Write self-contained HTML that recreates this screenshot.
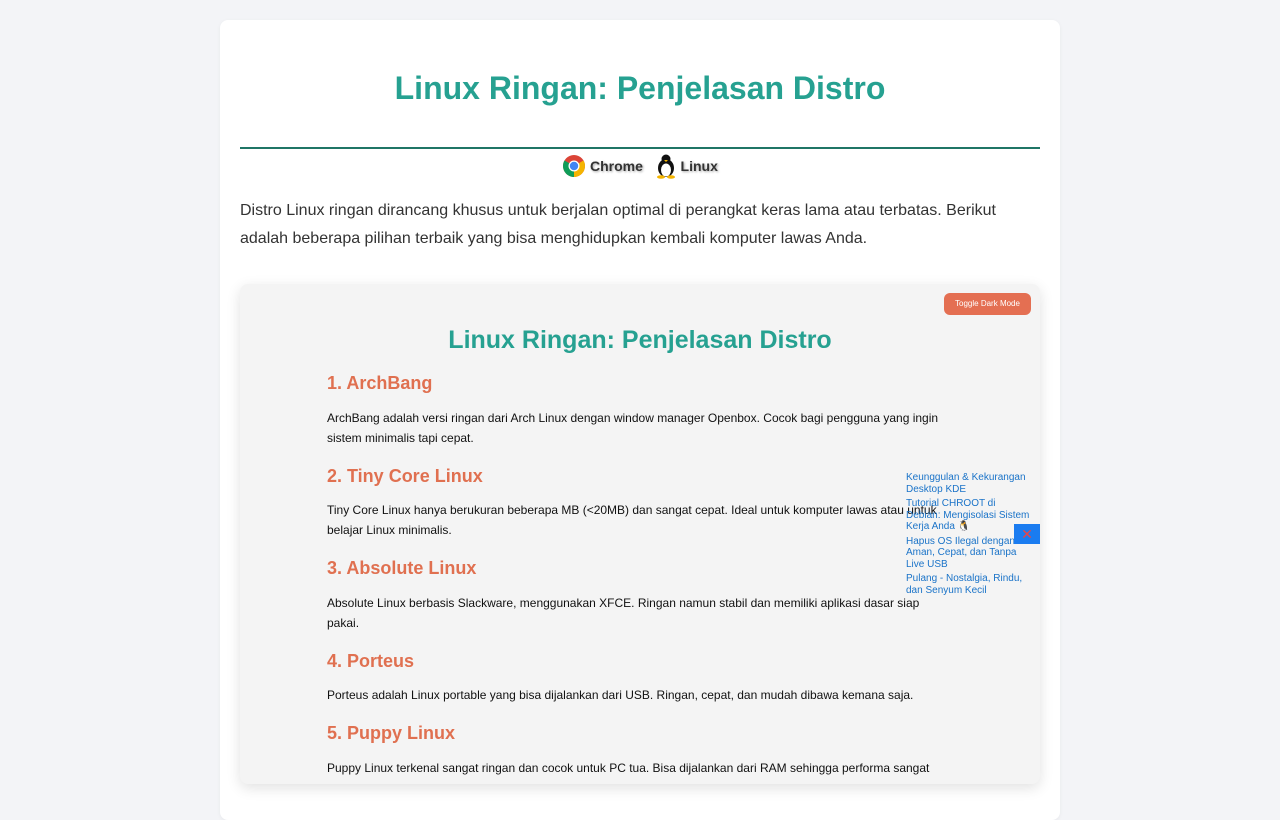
<!DOCTYPE html>
<html><head><meta charset="utf-8"><style>
body{margin:0;background:#f3f4f7;font-family:"Liberation Sans",sans-serif;height:800px;overflow:hidden}
.card{position:absolute;left:220px;top:20px;width:840px;height:800px;background:#fff;border-radius:8px;box-shadow:0 1px 4px rgba(0,0,0,.05)}
h1{position:absolute;left:0;width:840px;top:48px;margin:0;text-align:center;color:#26a191;font-size:32px;line-height:40px}
.line{position:absolute;left:20px;width:800px;top:127px;height:2px;background:#1f7566}
.badges{position:absolute;left:0;width:840px;top:133px;text-align:center;font-size:14px;font-weight:bold;color:#333;text-shadow:1px 1px 2px rgba(0,0,0,.35)}
.badges span{display:inline-flex;align-items:center;vertical-align:middle;margin:0 2px}
.intro{position:absolute;left:20px;width:800px;top:177px;font-size:16px;line-height:28px;color:#333;margin:0}
.frame{position:absolute;left:20px;top:264px;width:800px;height:500px;background:#f4f4f4;border-radius:8px;box-shadow:0 4px 14px rgba(0,0,0,.12);overflow:hidden}
.btn{position:absolute;left:704px;top:9px;width:87px;height:22px;background:#e46f52;color:#fff;border-radius:6px;font-size:8px;line-height:22px;text-align:center}
.frame h2{position:absolute;left:0;width:800px;top:40px;margin:0;text-align:center;color:#26a191;font-size:25px;line-height:32px}
.col{position:absolute;left:87px;top:86px;width:625px}
.col h3{margin:0;color:#e07050;font-size:18px;line-height:26px;height:37.5px}
.col p{margin:0 0 15px;font-size:12px;line-height:20px;color:#111}
.side{position:absolute;left:666px;top:188px;width:126px;font-size:10px;line-height:11.5px;color:#1a73c8}
.side div{margin-bottom:3px}
.x{position:absolute;left:774px;top:240px;width:26px;height:20px;background:#1a7cf0;color:#e44;font-size:14px;line-height:20px;text-align:center}
</style></head><body>
<div class="card">
<h1>Linux Ringan: Penjelasan Distro</h1>
<div class="line"></div>
<div class="badges"><span><svg width="24" height="24" viewBox="0 0 24 24"><circle cx="12" cy="12" r="11" fill="#db4437"/><path d="M12 12 L2.5 6.5 A11 11 0 0 0 12 23 Z" fill="#0f9d58"/><path d="M12 12 L12 23 A11 11 0 0 0 21.5 6.5 Z" fill="#f4b400"/><circle cx="12" cy="12" r="5.5" fill="#fff"/><circle cx="12" cy="12" r="4.2" fill="#4285f4"/></svg>&nbsp;Chrome</span>&nbsp;&nbsp;<span><svg width="22" height="26" viewBox="0 0 22 26"><ellipse cx="11" cy="15" rx="8" ry="9" fill="#111"/><ellipse cx="11" cy="17" rx="5" ry="6.5" fill="#fff"/><circle cx="11" cy="6" r="4.5" fill="#111"/><path d="M9 7 L13 7 L11 9Z" fill="#f4b400"/><ellipse cx="6" cy="24" rx="4" ry="1.8" fill="#f4b400"/><ellipse cx="16" cy="24" rx="4" ry="1.8" fill="#f4b400"/></svg>&nbsp;Linux</span></div>
<p class="intro">Distro Linux ringan dirancang khusus untuk berjalan optimal di perangkat keras lama atau terbatas. Berikut adalah beberapa pilihan terbaik yang bisa menghidupkan kembali komputer lawas Anda.</p>
<div class="frame">
<div class="btn">Toggle Dark Mode</div>
<h2>Linux Ringan: Penjelasan Distro</h2>
<div class="col">
<h3>1. ArchBang</h3>
<p>ArchBang adalah versi ringan dari Arch Linux dengan window manager Openbox. Cocok bagi pengguna yang ingin sistem minimalis tapi cepat.</p>
<h3>2. Tiny Core Linux</h3>
<p>Tiny Core Linux hanya berukuran beberapa MB (&lt;20MB) dan sangat cepat. Ideal untuk komputer lawas atau untuk belajar Linux minimalis.</p>
<h3>3. Absolute Linux</h3>
<p>Absolute Linux berbasis Slackware, menggunakan XFCE. Ringan namun stabil dan memiliki aplikasi dasar siap pakai.</p>
<h3>4. Porteus</h3>
<p>Porteus adalah Linux portable yang bisa dijalankan dari USB. Ringan, cepat, dan mudah dibawa kemana saja.</p>
<h3>5. Puppy Linux</h3>
<p>Puppy Linux terkenal sangat ringan dan cocok untuk PC tua. Bisa dijalankan dari RAM sehingga performa sangat cepat.</p>
</div>
<div class="side"><div>Keunggulan &amp; Kekurangan Desktop KDE</div><div>Tutorial CHROOT di Debian: Mengisolasi Sistem Kerja Anda 🐧</div><div>Hapus OS Ilegal dengan Aman, Cepat, dan Tanpa Live USB</div><div>Pulang - Nostalgia, Rindu, dan Senyum Kecil</div></div>
<div class="x">✕</div>
</div>
</div>
</body></html>
